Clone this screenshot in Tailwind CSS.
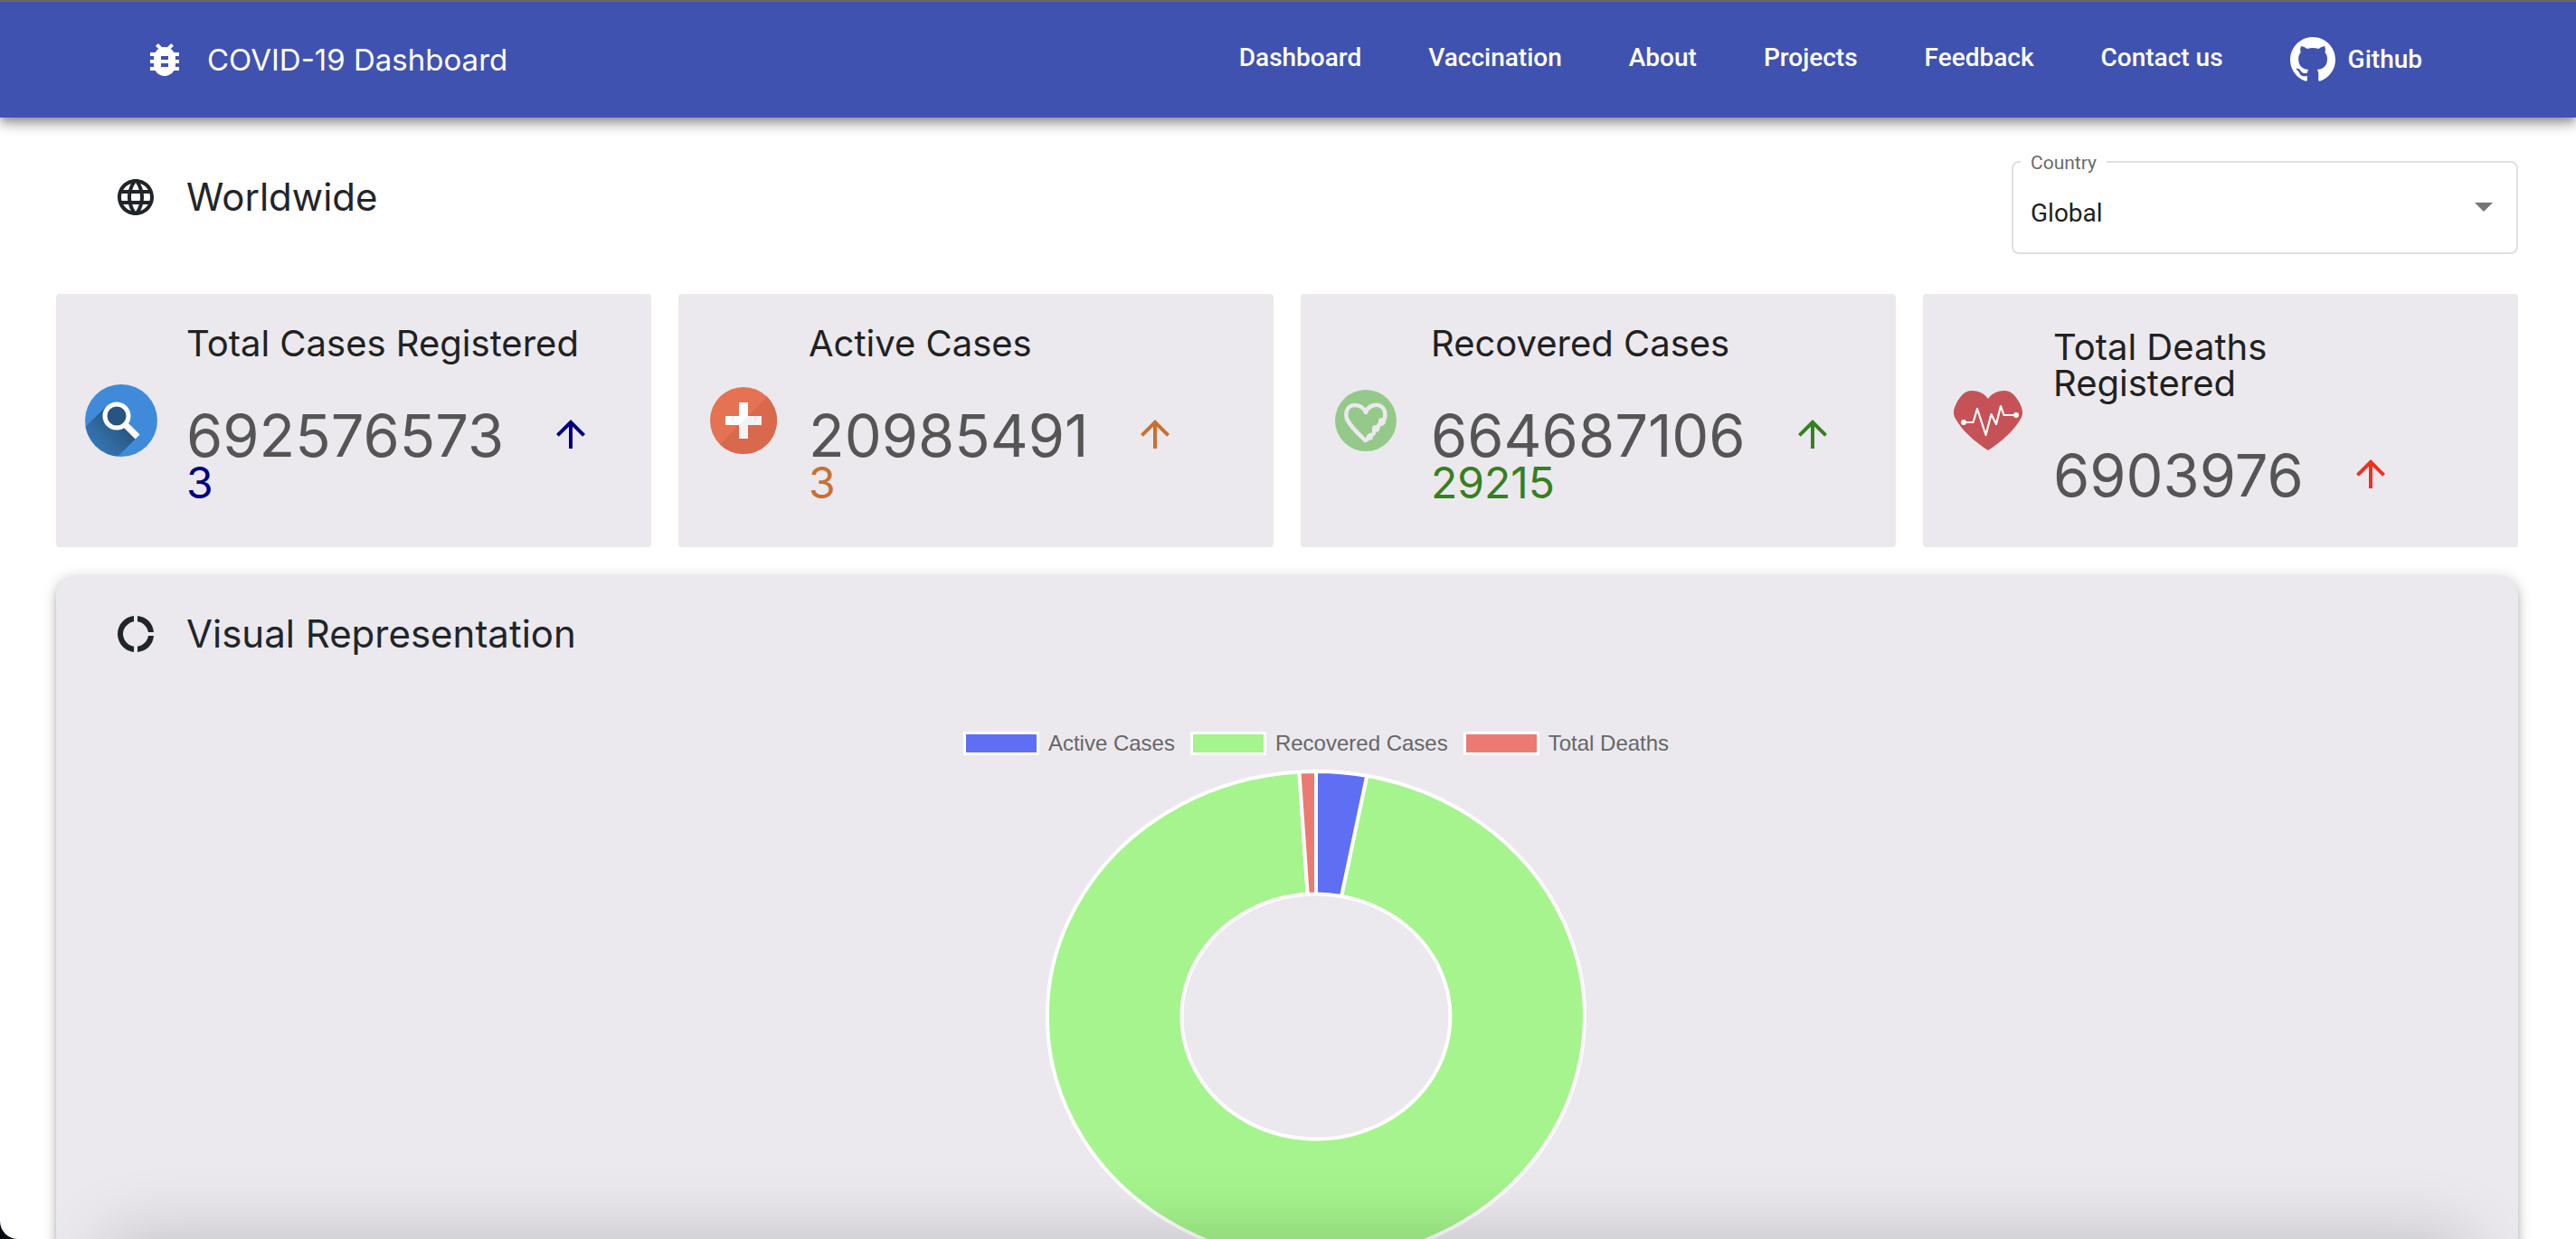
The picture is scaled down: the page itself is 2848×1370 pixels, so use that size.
<!DOCTYPE html>
<html lang="en">
<head>
<meta charset="utf-8">
<meta name="viewport" content="width=device-width, initial-scale=1">
<title>COVID-19 Dashboard</title>
<script src="https://cdn.jsdelivr.net/npm/@tailwindcss/browser@4"></script>
</head>
<body class="bg-[#020a14]">
<div class="relative flex h-screen flex-col overflow-hidden rounded-bl-[20px] bg-white font-['Inter',sans-serif] text-[#212529]">

  <header class="relative z-10 flex h-[130px] shrink-0 items-center justify-between border-t-2 border-[#666] bg-[#4052b0] pr-[170px] pl-[158px] text-white shadow-[0_4px_8px_-2px_rgba(0,0,0,0.2),0_8px_10px_rgba(0,0,0,0.14),0_2px_20px_rgba(0,0,0,0.12),0_6px_16px_rgba(0,0,0,0.15)]">
    <a href="#" class="flex items-center gap-[23px]">
      <svg class="size-12" viewBox="0 0 24 24" fill="currentColor" aria-hidden="true"><path d="M20 8h-2.81c-.45-.78-1.07-1.45-1.82-1.96L17 4.41 15.59 3l-2.17 2.17C12.96 5.06 12.49 5 12 5s-.96.06-1.41.17L8.41 3 7 4.41l1.62 1.63C7.88 6.55 7.26 7.22 6.81 8H4v2h2.09c-.05.33-.09.66-.09 1v1H4v2h2v1c0 .34.04.67.09 1H4v2h2.81c1.04 1.79 2.97 3 5.19 3s4.15-1.21 5.19-3H20v-2h-2.09c.05-.33.09-.66.09-1v-1h2v-2h-2v-1c0-.34-.04-.67-.09-1H20V8zm-6 8h-4v-2h4v2zm0-4h-4v-2h4v2z"/></svg>
      <span class="text-[33px] leading-10">COVID-19 Dashboard</span>
    </a>
    <nav class="flex items-center gap-[74px] font-['Roboto',sans-serif] text-[28px] leading-8 font-medium">
      <a href="#" class="pb-1">Dashboard</a>
      <a href="#" class="pb-1">Vaccination</a>
      <a href="#" class="pb-1">About</a>
      <a href="#" class="pb-1">Projects</a>
      <a href="#" class="pb-1">Feedback</a>
      <a href="#" class="pb-1">Contact us</a>
      <a href="#" class="flex items-center gap-[14px]">
        <svg class="size-[50px]" viewBox="0 0 16 16" fill="currentColor" aria-hidden="true"><path d="M8 0C3.58 0 0 3.58 0 8c0 3.54 2.29 6.53 5.47 7.59.4.07.55-.17.55-.38 0-.19-.01-.82-.01-1.49-2.01.37-2.53-.49-2.69-.94-.09-.23-.48-.94-.82-1.13-.28-.15-.68-.52-.01-.53.63-.01 1.08.58 1.23.82.72 1.21 1.87.87 2.33.66.07-.52.28-.87.51-1.07-1.78-.2-3.64-.89-3.64-3.95 0-.87.31-1.59.82-2.15-.08-.2-.36-1.02.08-2.12 0 0 .67-.21 2.2.82.64-.18 1.32-.27 2-.27s1.36.09 2 .27c1.53-1.04 2.2-.82 2.2-.82.44 1.1.16 1.92.08 2.12.51.56.82 1.27.82 2.15 0 3.07-1.87 3.75-3.65 3.95.29.25.54.73.54 1.48 0 1.07-.01 1.93-.01 2.2 0 .21.15.46.55.38A8.01 8.01 0 0 0 16 8c0-4.42-3.58-8-8-8z"/></svg>
        Github
      </a>
    </nav>
  </header>

  <main class="flex min-h-0 flex-1 flex-col pr-16 pl-[62px]">
    <div class="flex items-start justify-between pt-12 pb-11 pl-16">
      <h1 class="flex items-center gap-8 pt-4 text-[42px] leading-12">
        <svg class="size-12" viewBox="0 0 24 24" fill="currentColor" aria-hidden="true"><path d="M11.99 2C6.47 2 2 6.48 2 12s4.47 10 9.99 10C17.52 22 22 17.52 22 12S17.52 2 11.99 2zm6.93 6h-2.95c-.32-1.25-.78-2.45-1.38-3.56 1.84.63 3.37 1.91 4.33 3.56zM12 4.04c.83 1.2 1.48 2.53 1.91 3.96h-3.82c.43-1.43 1.08-2.76 1.91-3.96zM4.26 14C4.1 13.36 4 12.69 4 12s.1-1.36.26-2h3.38c-.08.66-.14 1.32-.14 2s.06 1.34.14 2H4.26zm.82 2h2.95c.32 1.25.78 2.45 1.38 3.56-1.84-.63-3.37-1.9-4.33-3.56zm2.95-8H5.08c.96-1.66 2.49-2.93 4.33-3.56C8.81 5.55 8.35 6.75 8.03 8zM12 19.96c-.83-1.2-1.48-2.53-1.91-3.96h3.82c-.43 1.43-1.08 2.76-1.91 3.96zM14.34 14H9.66c-.09-.66-.16-1.32-.16-2s.07-1.35.16-2h4.68c.09.65.16 1.32.16 2s-.07 1.34-.16 2zm.25 5.56c.6-1.11 1.06-2.31 1.38-3.56h2.95c-.96 1.65-2.49 2.93-4.33 3.56zM16.36 14c.08-.66.14-1.32.14-2s-.06-1.34-.14-2h3.38c.16.64.26 1.31.26 2s-.1 1.36-.26 2h-3.38z"/></svg>
        Worldwide
      </h1>
      <div class="relative h-[103px] w-[560px] font-['Roboto',sans-serif]">
        <label for="country" class="absolute -top-[10px] left-[10px] bg-white px-[11px] text-[21px] leading-6 text-[#6b6b6b]">Country</label>
        <select id="country" class="h-full w-full appearance-none rounded-lg border-2 border-[#dfdfdf] bg-transparent pt-3 pr-20 pl-[19px] text-[28px] text-[#212121]">
          <option>Global</option>
        </select>
        <svg class="pointer-events-none absolute top-[46px] right-7 h-[10px] w-5" viewBox="0 0 20 10" fill="#757575" aria-hidden="true"><path d="M0 0h20L10 10z"/></svg>
      </div>
    </div>

    <div class="grid shrink-0 grid-cols-4 gap-[30px] text-[#212121]">
      <article class="flex h-[280px] items-center rounded-sm bg-[#ebe9ee]">
        <div class="flex w-36 shrink-0 justify-center">
          <svg class="size-20" viewBox="0 0 80 80" aria-hidden="true">
            <defs>
              <clipPath id="disc"><circle cx="40" cy="40" r="40"/></clipPath>
              <linearGradient id="shade" x1="42" y1="42" x2="14" y2="70" gradientUnits="userSpaceOnUse"><stop stop-color="#27557f"/><stop offset="1" stop-color="#3475b3"/></linearGradient>
            </defs>
            <circle cx="40" cy="40" r="40" fill="#3f8bd9"/>
            <path d="M24 24L-4 51V80H36L56 60L46 36Z" fill="url(#shade)" clip-path="url(#disc)"/>
            <path d="M44 44L58 58" stroke="#fff" stroke-width="7"/>
            <circle cx="35" cy="35" r="13" fill="#255580" stroke="#fff" stroke-width="5"/>
          </svg>
        </div>
        <div class="pb-3">
          <h2 class="mb-[54px] text-[40px] leading-10">Total Cases Registered</h2>
          <div class="flex items-center gap-[50px]">
            <span class="text-[65px] leading-14 text-[#555]">692576573</span>
            <svg class="mb-1 size-12 text-[#00007f]" viewBox="0 0 24 24" fill="currentColor" aria-hidden="true"><path d="M4 12l1.410 1.410L11 7.830V20h2V7.830l5.580 5.590L20 12l-8-8-8 8z"/></svg>
          </div>
          <p class="text-5xl leading-12 text-[#00007f]">3</p>
        </div>
      </article>

      <article class="flex h-[280px] items-center rounded-sm bg-[#ebe9ee]">
        <div class="flex w-36 shrink-0 justify-center">
          <svg class="size-[74px]" viewBox="0 0 74 74" aria-hidden="true">
            <circle cx="37" cy="37" r="37" fill="#e57253"/>
            <path d="M63.200 10.800A37 37 0 0 1 10.800 63.200Z" fill="#d9694d"/>
            <path d="M33 17h8a1 1 0 0 1 1 1v14h14a1 1 0 0 1 1 1v8a1 1 0 0 1-1 1H42v14a1 1 0 0 1-1 1h-8a1 1 0 0 1-1-1V42H18a1 1 0 0 1-1-1v-8a1 1 0 0 1 1-1h14V18a1 1 0 0 1 1-1z" fill="#fff"/>
            <path d="M42 32h14a1 1 0 0 1 1 1v8a1 1 0 0 1-1 1H42v14a1 1 0 0 1-1 1h-8a1 1 0 0 1-1-1V42z" fill="#f3f3f3"/>
          </svg>
        </div>
        <div class="pb-3">
          <h2 class="mb-[54px] text-[40px] leading-10">Active Cases</h2>
          <div class="flex items-center gap-[50px]">
            <span class="text-[65px] leading-14 text-[#555]">20985491</span>
            <svg class="mb-1 size-12 text-[#c87033]" viewBox="0 0 24 24" fill="currentColor" aria-hidden="true"><path d="M4 12l1.410 1.410L11 7.830V20h2V7.830l5.580 5.590L20 12l-8-8-8 8z"/></svg>
          </div>
          <p class="text-5xl leading-12 text-[#c87033]">3</p>
        </div>
      </article>

      <article class="flex h-[280px] items-center rounded-sm bg-[#ebe9ee]">
        <div class="flex w-36 shrink-0 justify-center">
          <svg class="size-[68px]" viewBox="0 0 68 68" fill="none" aria-hidden="true">
            <circle cx="34" cy="34" r="34" fill="#94c98a"/>
            <path d="M34 25C32 20 27 17 22 17C14 17 11 24 13 32C17 41 26 49 33.500 56C39 54 36 51 39 50C45 50 42 47 44 42C50 44 46 40 49 38C54 39 50 35 54 34C56 30 56 24 53 20C47 14 37 17 34 25Z" stroke="#ebe9ee" stroke-width="4.500" stroke-linejoin="round"/>
            <g fill="#ebe9ee"><circle cx="38.500" cy="52" r="3.500"/><circle cx="45" cy="43" r="4"/><circle cx="52" cy="35" r="4"/></g>
          </svg>
        </div>
        <div class="pb-3">
          <h2 class="mb-[54px] text-[40px] leading-10">Recovered Cases</h2>
          <div class="flex items-center gap-[50px]">
            <span class="text-[65px] leading-14 text-[#555]">664687106</span>
            <svg class="mb-1 size-12 text-[#377f22]" viewBox="0 0 24 24" fill="currentColor" aria-hidden="true"><path d="M4 12l1.410 1.410L11 7.830V20h2V7.830l5.580 5.590L20 12l-8-8-8 8z"/></svg>
          </div>
          <p class="text-5xl leading-12 text-[#377f22]">29215</p>
        </div>
      </article>

      <article class="flex h-[280px] items-center rounded-sm bg-[#ebe9ee]">
        <div class="flex w-36 shrink-0 justify-center">
          <svg class="h-[66px] w-[76px]" viewBox="0 0 76 66" fill="none" aria-hidden="true">
            <path d="M38 9C34 3 27 0 20 0C13 0 9 4 4 12C-1 21-1 26 2 31C9 44 24 57 38 66C52 57 67 44 74 31C77 26 77 21 72 12C67 4 63 0 56 0C49 0 42 3 38 9Z" fill="#c55256"/>
            <path d="M11 35H21.500L26 20L35.500 49L41.500 26L47 37L52 17L55.500 27H69" stroke="#fff" stroke-width="2.200" stroke-linejoin="round"/>
            <circle cx="11" cy="35" r="3" fill="#fff"/><circle cx="69" cy="27" r="3" fill="#fff"/>
          </svg>
        </div>
        <div class="pb-3">
          <h2 class="mb-[54px] text-[40px] leading-10">Total Deaths<br>Registered</h2>
          <div class="flex items-center gap-[50px]">
            <span class="text-[65px] leading-14 text-[#555]">6903976</span>
            <svg class="mb-1 size-12 text-[#ea3323]" viewBox="0 0 24 24" fill="currentColor" aria-hidden="true"><path d="M4 12l1.410 1.410L11 7.830V20h2V7.830l5.580 5.590L20 12l-8-8-8 8z"/></svg>
          </div>
        </div>
      </article>
    </div>

    <section class="mt-8 flex-1 rounded-t-[20px] bg-[#ebe9ee] pt-10 shadow-[0_6px_6px_-4px_rgba(0,0,0,0.2),0_6px_8px_rgba(0,0,0,0.14),0_2px_16px_rgba(0,0,0,0.2)]">
      <h2 class="flex items-center gap-8 pl-16 text-[42px] leading-12">
        <svg class="size-12" viewBox="0 0 24 24" fill="currentColor" aria-hidden="true"><path d="M11 5.080V2c-5 .5-9 4.810-9 10s4 9.500 9 10v-3.080c-3-.48-6-3.400-6-6.920s3-6.440 6-6.920zM18.970 11H22c-.47-5-4-8.530-9-9v3.080C16 5.510 18.540 8 18.970 11zM13 18.920V22c5-.47 8.530-4 9-9h-3.030c-.43 3-2.970 5.490-5.970 5.920z"/></svg>
        Visual Representation
      </h2>
      <div class="flex flex-col items-center pt-[84px] pl-16">
        <ul class="flex items-center gap-[17px] font-['Liberation_Sans',sans-serif] text-2xl leading-[26px] text-[#666]">
          <li class="flex items-center gap-[10px]"><span class="h-[26px] w-[84px] border-[3px] border-white bg-[#5e6ff3]"></span>Active Cases</li>
          <li class="flex items-center gap-[10px]"><span class="h-[26px] w-[84px] border-[3px] border-white bg-[#a5f48d]"></span>Recovered Cases</li>
          <li class="flex items-center gap-[10px]"><span class="h-[26px] w-[84px] border-[3px] border-white bg-[#eb7b72]"></span>Total Deaths</li>
        </ul>
        <svg class="mt-4 h-[546px] w-[598px] shrink-0" viewBox="-299 -273 598 546" stroke="#fff" stroke-width="4" stroke-linejoin="bevel" role="img" aria-label="Share of active, recovered and fatal cases">
          <path fill="#a5f48d" d="M56.200 -266.100A297 271 0 1 1 -18.600 -270.500L-9.300 -135.200A148.500 135.500 0 1 0 28.100 -133Z"/>
          <path fill="#eb7b72" d="M-18.600 -270.500A297 271 0 0 1 0 -271V-135.500A148.500 135.500 0 0 0 -9.300 -135.200Z"/>
          <path fill="#5e6ff3" d="M0 -271A297 271 0 0 1 56.200 -266.100L28.100 -133A148.500 135.500 0 0 0 0 -135.500Z"/>
        </svg>
      </div>
    </section>
  </main>

  <div class="pointer-events-none absolute inset-x-[120px] top-full h-20 shadow-[0_0_80px_rgba(0,0,0,0.2)]"></div>
</div>
</body>
</html>
